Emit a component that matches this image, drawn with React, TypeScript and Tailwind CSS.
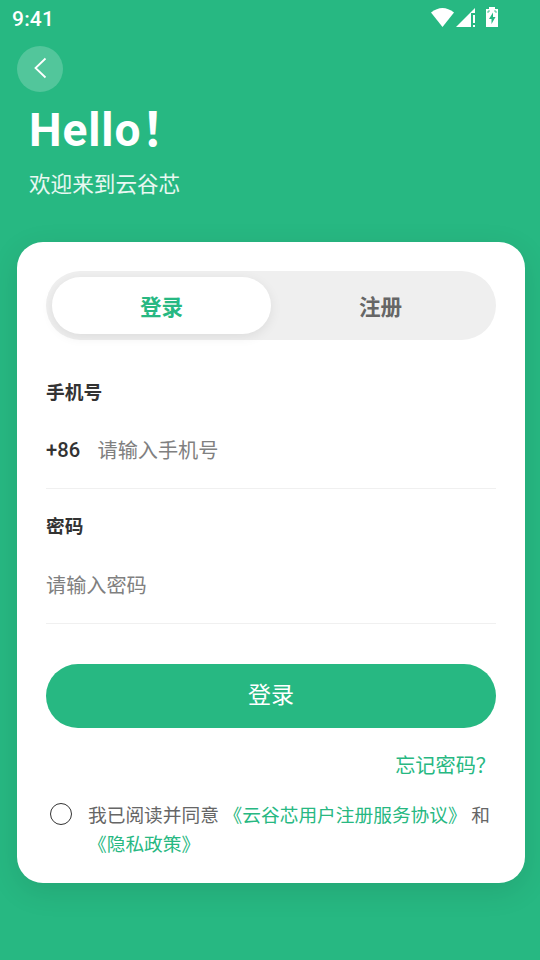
export default function App() {
    return (
        <div className="w-[540px] h-[960px] bg-[#27b882] overflow-hidden font-['Roboto','Noto_Sans_CJK_SC',sans-serif]">
            <header className="h-[38px] pl-3 pr-[42px] flex items-center justify-between text-white">
                <span className="text-[21px] font-medium leading-none tracking-[0.2px]">9:41</span>
                <svg className="-mt-1" width="68" height="22" viewBox="430 6 68 22" fill="#fff">
                    <path d="M431 12.500Q442.500 3.500 454 12.500L442.500 27Z" />
                    <path d="M475 8V13H471V27H456Z" />
                    <path d="M473 15h2v8h-2zM473 25h2v2h-2z" />
                    <path d="M489 7h6v2h3v18h-12V9h3z" />
                    <path d="M493 12.500l-4 6.500h2.500v5l4-7H493z" fill="#27b882" />
                    <path d="M488 13v-2h2M494 11h2v2" fill="none" stroke="#27b882" strokeWidth="0.8" />
                </svg>
            </header>

            <button className="mt-2 ml-[17px] size-[46px] rounded-full bg-white/20 flex items-center justify-center">
                <svg className="-mt-0.5" width="14" height="22" viewBox="0 0 14 22" fill="none" stroke="#fff" strokeWidth="1.8">
                    <path d="M12.500 1.500L2.500 11L12.500 20.500" />
                </svg>
            </button>

            <section className="ml-[29px] h-[150px] text-white">
                <h1 className="h-[73px] leading-[76px] text-[46.080px] font-bold tracking-[0.900px] whitespace-nowrap">Hello！</h1>
                <p className="leading-[40px] text-[21.600px] text-white/90">欢迎来到云谷芯</p>
            </section>

            <main className="ml-[17px] w-[508px] h-[641px] px-[29px] pt-[29px] rounded-[26px] bg-white shadow-[0_8px_30px_rgba(0,0,0,0.1)]">
                <div className="h-[69px] p-1.5 rounded-full bg-[#efefef] grid grid-cols-2 text-[21.600px] font-bold">
                    <button className="pt-1.5 rounded-full bg-white text-[#27b882] shadow-[0_3px_12px_rgba(0,0,0,0.08)]">登录</button>
                    <button className="pt-1.5 text-[#666666]">注册</button>
                </div>

                <label className="block mt-[38px] leading-[30px] text-[18.720px] font-bold text-[#333333]">手机号</label>
                <div className="h-[81px] pt-1 flex items-center border-b border-[#f0f0f0] text-[20.160px]">
                    <span className="w-[51.500px] font-medium text-[#333333]">+86</span>
                    <span className="pt-0.5 text-[#808080]">请输入手机号</span>
                </div>
                <label className="block mt-[23px] leading-[30px] text-[18.720px] font-bold text-[#333333]">密码</label>
                <div className="h-[82px] pt-2 flex items-center border-b border-[#f0f0f0] text-[20.160px] text-[#808080]">
                    请输入密码
                </div>

                <button className="mt-10 w-full h-16 rounded-full bg-[#27b882] text-white text-[23.040px]">登录</button>
                <p className="mt-[23px] leading-[30px] text-right text-[20.160px] text-[#27b882]">忘记密码？</p>
                <div className="mt-[21px] flex">
                    <span className="ml-1 mt-[1px] mr-4 size-[22px] shrink-0 rounded-full border border-[#333333]" />
                    <p className="leading-[29px] text-[18.720px] text-[#666666] whitespace-nowrap">
                        我已阅读并同意 <span className="text-[#27b882]">《云谷芯用户注册服务协议》</span> 和
                        <br />
                        <span className="text-[#27b882]">《隐私政策》</span>
                    </p>
                </div>
            </main>
        </div>
    );
}
